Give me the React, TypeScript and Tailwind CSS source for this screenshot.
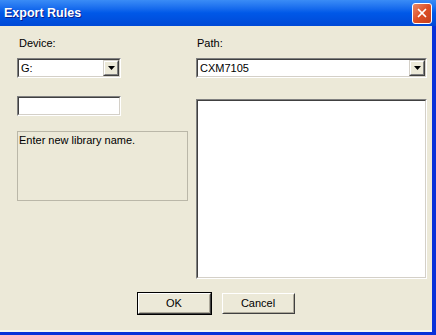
import { X } from 'lucide-react';

const font = { fontFamily: '"Liberation Sans", Arial, sans-serif' };

function Sunken({ className, children }: { className: string; children?: React.ReactNode }) {
  return (
    <div className={`border border-t-[#808080] border-l-[#808080] border-b-white border-r-white ${className}`}>
      <div className="h-full w-full border border-t-[#404040] border-l-[#404040] border-b-[#d4d0c8] border-r-[#d4d0c8] bg-white">
        {children}
      </div>
    </div>
  );
}

function Combo({ value, className }: { value: string; className: string }) {
  return (
    <Sunken className={`h-[20px] ${className}`}>
      <div className="flex h-full items-center justify-between">
        <span className="pl-[2px] text-[11px] leading-none text-black">{value}</span>
        <div className="flex h-[16px] w-[16px] items-center justify-center border border-t-[#d4d0c8] border-l-[#d4d0c8] border-b-[#404040] border-r-[#404040] bg-[#ece9d8]">
          <div className="flex h-full w-full items-center justify-center border border-t-white border-l-white border-b-[#808080] border-r-[#808080]">
            <svg width="7" height="4" viewBox="0 0 7 4">
              <path d="M0 0h7L3.5 4z" fill="#000" />
            </svg>
          </div>
        </div>
      </div>
    </Sunken>
  );
}

function Button({ label, isDefault }: { label: string; isDefault?: boolean }) {
  return (
    <div className={`h-[23px] w-[75px] border ${isDefault ? 'border-black' : 'border-[#ece9d8]'}`}>
      <div className="h-full w-full border border-t-white border-l-white border-b-[#404040] border-r-[#404040]">
        <div className="flex h-full w-full items-center justify-center border border-t-[#ece9d8] border-l-[#ece9d8] border-b-[#aca899] border-r-[#aca899] bg-[#ece9d8] text-[11px] text-black">
          {label}
        </div>
      </div>
    </div>
  );
}

export default function App() {
  return (
    <div className="flex h-[335px] w-[436px] flex-col bg-[#0831d9]" style={font}>
      {/* Title bar */}
      <div className="flex h-[26px] items-center justify-between bg-gradient-to-b from-[#3a8cf6] via-[#0058e8] to-[#0049d6] pl-[4px] pr-[4px]">
        <span className="text-[12.5px] font-bold text-white [text-shadow:1px_1px_0_#0a1e8a]">Export Rules</span>
        <div className="flex h-[21px] w-[20px] items-center justify-center rounded-[3px] border border-white bg-gradient-to-br from-[#e98866] via-[#dd4f25] to-[#c4401d]">
          <X className="h-[14px] w-[14px] text-white" strokeWidth={3} />
        </div>
      </div>

      {/* Body */}
      <div className="flex flex-1 pr-[4px] pb-[3px]">
        <div className="flex flex-1 flex-col border-b-2 border-[#f7f6f1] bg-[#ece9d8] pl-[17px] pt-[11px] text-[11px] text-black">
          <div className="flex gap-[8px]">
            <div className="flex w-[171px] flex-col">
              <span className="ml-[2px] h-[13px] leading-[13px]">Device:</span>
              <Combo value="G:" className="mt-[8px] w-[104px]" />
              <Sunken className="mt-[18px] h-[20px] w-[104px]" />
              <div className="mt-[15px] h-[70px] w-[171px] border border-[#bab7a8] pl-[1px] pt-[2px] leading-[13px]">
                Enter new library name.
              </div>
            </div>
            <div className="flex w-[231px] flex-col">
              <span className="ml-[1px] h-[13px] leading-[13px]">Path:</span>
              <Combo value="CXM7105" className="mt-[8px] w-[231px]" />
              <Sunken className="mt-[21px] h-[180px] w-[231px]" />
            </div>
          </div>
          <div className="mt-[13px] flex justify-center gap-[9px] pr-[17px]">
            <Button label="OK" isDefault />
            <Button label="Cancel" />
          </div>
        </div>
      </div>
    </div>
  );
}
